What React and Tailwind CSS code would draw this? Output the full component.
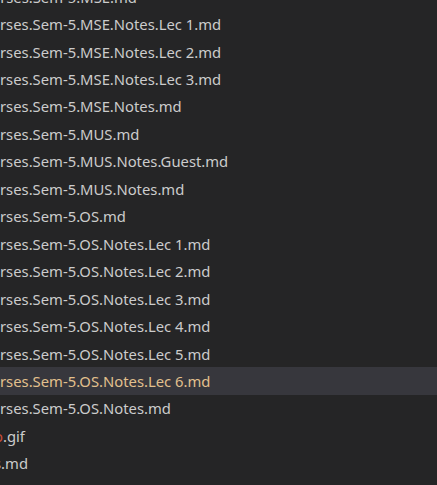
const rows = [
  { text: 'urses.Sem-5.MSE.md', shift: 'ml-[-9px]' },
  { text: 'rses.Sem-5.MSE.Notes.Lec 1.md' },
  { text: 'rses.Sem-5.MSE.Notes.Lec 2.md' },
  { text: 'rses.Sem-5.MSE.Notes.Lec 3.md' },
  { text: 'rses.Sem-5.MSE.Notes.md' },
  { text: 'rses.Sem-5.MUS.md' },
  { text: 'rses.Sem-5.MUS.Notes.Guest.md' },
  { text: 'rses.Sem-5.MUS.Notes.md' },
  { text: 'rses.Sem-5.OS.md' },
  { text: 'rses.Sem-5.OS.Notes.Lec 1.md' },
  { text: 'rses.Sem-5.OS.Notes.Lec 2.md' },
  { text: 'rses.Sem-5.OS.Notes.Lec 3.md' },
  { text: 'rses.Sem-5.OS.Notes.Lec 4.md' },
  { text: 'rses.Sem-5.OS.Notes.Lec 5.md' },
  { text: 'rses.Sem-5.OS.Notes.Lec 6.md', active: true },
  { text: 'rses.Sem-5.OS.Notes.md' },
  { red: 'o', text: '.gif', shift: 'ml-[-6px]' },
  { text: 's.md', shift: 'ml-[-6px]' },
]

export default function App() {
  return (
    <div className="w-[437px] h-[485px] overflow-hidden bg-[#252526] font-['Noto_Sans','Open_Sans',sans-serif] text-[14.8px] text-[#cccccc]">
      <div className="mt-[-17px] flex flex-col">
        {rows.map((r, i) => (
          <div
            key={i}
            className={
              'h-[27.46px] flex items-center whitespace-nowrap ' +
              (r.active ? 'bg-[#37373d] text-[#e2c08d]' : '')
            }
          >
            <span className={r.shift || ''}>
              {r.red && <span className="text-[#c74e39]">{r.red}</span>}
              {r.text}
            </span>
          </div>
        ))}
      </div>
    </div>
  )
}
